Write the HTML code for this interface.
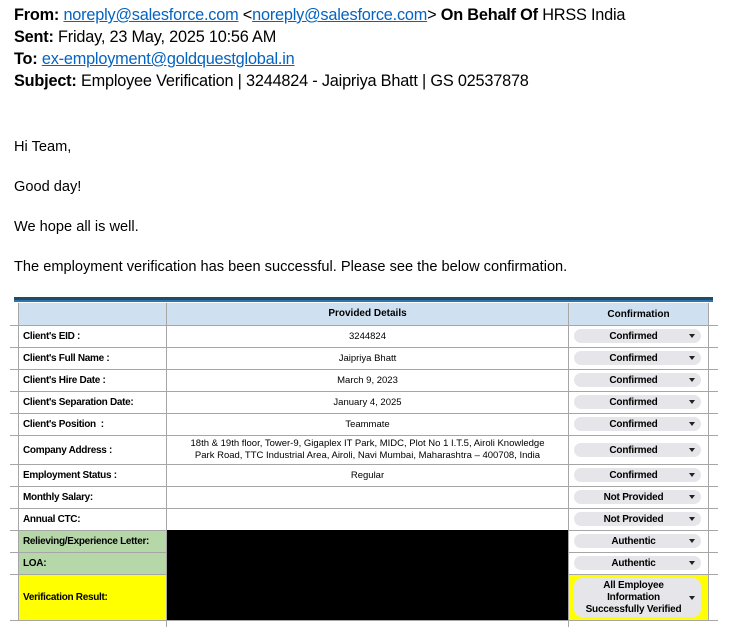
<!DOCTYPE html>
<html><head><meta charset="utf-8"><style>
*{margin:0;padding:0;box-sizing:border-box}
body{width:748px;height:627px;background:#fff;position:relative;overflow:hidden;font-family:"Liberation Sans",Arial,sans-serif;color:#000}
.h{position:absolute;left:14px;font-size:16.3px;white-space:nowrap;letter-spacing:-0.2px}
.h b{font-weight:bold}
.h a{color:#0563c1;text-decoration:underline}
.p{position:absolute;left:14px;font-size:14.6px;white-space:nowrap}
.bar1{position:absolute;left:14px;top:297px;width:699px;height:3px;background:#1f4e60}
.bar2{position:absolute;left:14px;top:300px;width:699px;height:2px;background:#2e74b5}
.hl{position:absolute;left:10px;width:708px;height:1px;background:#a6a6a6}
.vl{position:absolute;width:1px;background:#a6a6a6}
.c{position:absolute;font-size:10px;display:flex;align-items:center}
.lab{left:19px;width:147px;font-weight:bold;padding-left:4px;letter-spacing:-0.3px}
.mid{left:167px;width:401px;justify-content:center;text-align:center;font-size:9.5px;line-height:12px}
.pill{position:absolute;left:574px;width:127px;height:14px;background:#e6e6ea;border-radius:7px;font-weight:bold;font-size:10px;display:flex;align-items:center;justify-content:center;text-align:center;line-height:12px;padding-right:8px;padding-top:2px;letter-spacing:-0.2px}
.pill:after{content:"";position:absolute;right:6px;top:50%;margin-top:-2px;border-left:3px solid transparent;border-right:3px solid transparent;border-top:4px solid #222}
</style></head><body>
<div class="h" style="top:6px"><b>From:</b> <a>noreply@salesforce.com</a> &lt;<a>noreply@salesforce.com</a>&gt; <b>On Behalf Of</b> HRSS India</div>
<div class="h" style="top:28px"><b>Sent:</b> Friday, 23 May, 2025 10:56 AM</div>
<div class="h" style="top:50px"><b>To:</b> <a>ex-employment@goldquestglobal.in</a></div>
<div class="h" style="top:72px"><b>Subject:</b> Employee Verification | 3244824 - Jaipriya Bhatt | GS 02537878</div>
<div class="p" style="top:139px">Hi Team,</div>
<div class="p" style="top:179px">Good day!</div>
<div class="p" style="top:219px">We hope all is well.</div>
<div class="p" style="top:259px">The employment verification has been successful. Please see the below confirmation.</div>
<div class="bar1"></div><div class="bar2"></div>
<div style="position:absolute;left:18px;top:303px;width:690px;height:22px;background:#cfe0f1"></div>
<div style="position:absolute;left:18px;top:530px;width:148px;height:44px;background:#b6d7a8"></div>
<div style="position:absolute;left:18px;top:574px;width:148px;height:46px;background:#ffff00"></div>
<div style="position:absolute;left:568px;top:574px;width:140px;height:46px;background:#ffff00"></div>
<div class="hl" style="top:325px"></div><div class="hl" style="top:347px"></div><div class="hl" style="top:369px"></div><div class="hl" style="top:391px"></div><div class="hl" style="top:413px"></div><div class="hl" style="top:435px"></div><div class="hl" style="top:464px"></div><div class="hl" style="top:486px"></div><div class="hl" style="top:508px"></div><div class="hl" style="top:530px"></div><div class="hl" style="top:552px"></div><div class="hl" style="top:574px"></div><div class="hl" style="top:620px"></div>
<div class="vl" style="left:18px;top:303px;height:318px"></div>
<div class="vl" style="left:166px;top:303px;height:324px"></div>
<div class="vl" style="left:568px;top:303px;height:324px"></div>
<div class="vl" style="left:708px;top:303px;height:318px"></div>
<div style="position:absolute;left:167px;top:530px;width:401px;height:90px;background:#000"></div>
<div class="c mid" style="top:303px;height:22px;font-weight:bold;font-size:10px">Provided Details</div>
<div class="c" style="left:569px;width:139px;top:303px;height:22px;justify-content:center;font-weight:bold">Confirmation</div>
<div class="c lab" style="top:326px;height:21px">Client's EID :</div><div class="c mid" style="top:326px;height:21px">3244824</div><div class="pill" style="top:329px">Confirmed</div>
<div class="c lab" style="top:348px;height:21px">Client's Full Name :</div><div class="c mid" style="top:348px;height:21px">Jaipriya Bhatt</div><div class="pill" style="top:351px">Confirmed</div>
<div class="c lab" style="top:370px;height:21px">Client's Hire Date :</div><div class="c mid" style="top:370px;height:21px">March 9, 2023</div><div class="pill" style="top:373px">Confirmed</div>
<div class="c lab" style="top:392px;height:21px">Client's Separation Date:</div><div class="c mid" style="top:392px;height:21px">January 4, 2025</div><div class="pill" style="top:395px">Confirmed</div>
<div class="c lab" style="top:414px;height:21px">Client's Position &nbsp;:</div><div class="c mid" style="top:414px;height:21px">Teammate</div><div class="pill" style="top:417px">Confirmed</div>
<div class="c lab" style="top:436px;height:28px">Company Address :</div><div class="c mid" style="top:436px;height:28px">18th &amp; 19th floor, Tower-9, Gigaplex IT Park, MIDC, Plot No 1 I.T.5, Airoli Knowledge<br>Park Road, TTC Industrial Area, Airoli, Navi Mumbai, Maharashtra – 400708, India</div><div class="pill" style="top:443px">Confirmed</div>
<div class="c lab" style="top:465px;height:21px">Employment Status :</div><div class="c mid" style="top:465px;height:21px">Regular</div><div class="pill" style="top:468px">Confirmed</div>
<div class="c lab" style="top:487px;height:21px">Monthly Salary:</div><div class="pill" style="top:490px">Not Provided</div>
<div class="c lab" style="top:509px;height:21px">Annual CTC:</div><div class="pill" style="top:512px">Not Provided</div>
<div class="c lab" style="top:531px;height:21px">Relieving/Experience Letter:</div><div class="pill" style="top:534px">Authentic</div>
<div class="c lab" style="top:553px;height:21px">LOA:</div><div class="pill" style="top:556px">Authentic</div>
<div class="c lab" style="top:575px;height:45px">Verification Result:</div>
<div class="pill" style="top:578px;height:39px;border-radius:8px;padding-top:0">All Employee<br>Information<br>Successfully Verified</div>
</body></html>
